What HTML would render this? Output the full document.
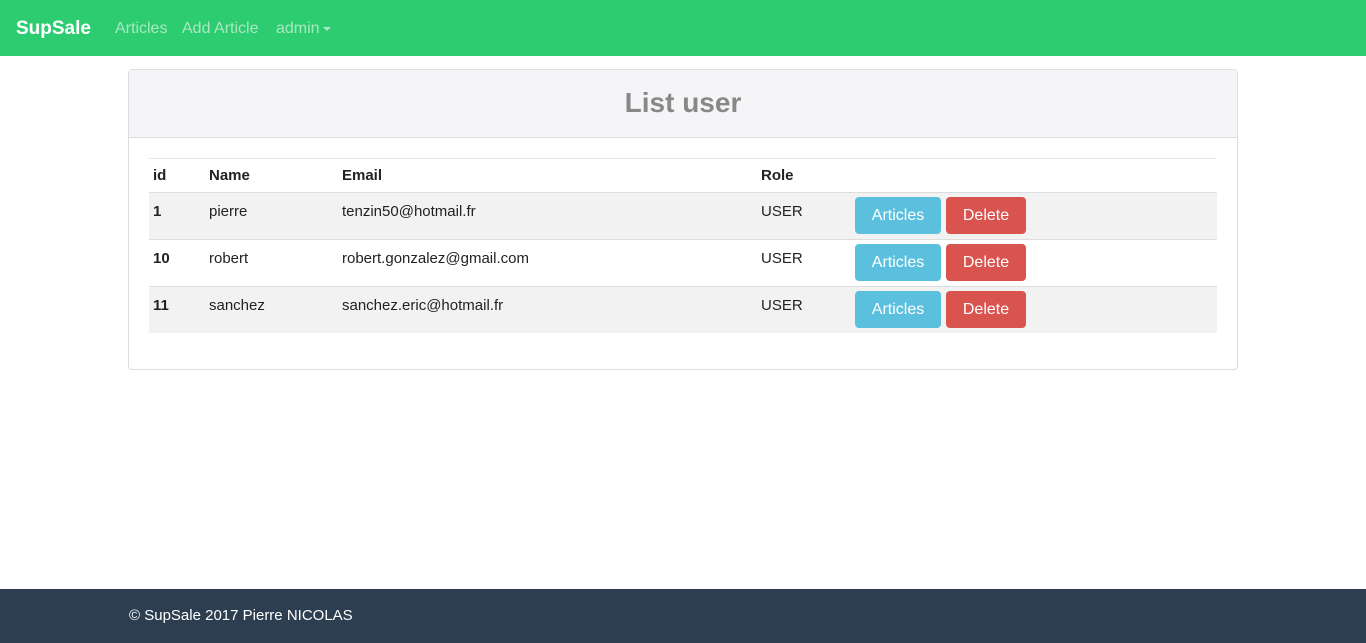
<!DOCTYPE html>
<html><head><style>
body{margin:0;width:1366px;height:643px;position:relative;font-family:"Liberation Sans",sans-serif;font-size:15px;color:#222;background:#fff;overflow:hidden}
.nav{position:absolute;left:0;top:0;width:1366px;height:56px;background:#2ecc71}
.nav span{position:absolute;top:20px;font-size:16px;color:#a8e8c2}
.brand{left:16px;font-weight:bold;font-size:19px!important;color:#fff!important;top:18px!important}
.caret{display:inline-block;border-top:4px solid #a8e8c2;border-left:4px solid transparent;border-right:4px solid transparent;vertical-align:middle;margin-left:3px}
.panel{position:absolute;left:128px;top:69px;width:1108px;height:299px;border:1px solid #ddd;border-radius:4px}
.ph{height:67px;background:#f5f5f7;border-bottom:1px solid #ddd;text-align:center;font-size:28px;font-weight:bold;color:#888;line-height:66px}
.t{position:absolute;left:20px;top:88px;width:1068px;border-top:1px solid #e8e8e8}
.r{position:absolute;left:0;width:1068px;height:46px}
.r div{position:absolute;top:10px}
.g{background:#f2f2f2}
.b{position:absolute;top:4px!important;height:37px;border-radius:4px;color:#fff;line-height:37px;text-align:center;font-size:16px}
.foot{position:absolute;left:0;top:589px;width:1366px;height:54px;background:#2c3e50;color:#fff}
</style></head><body>
<div class="nav"><span class="brand">SupSale</span><span style="left:115px">Articles</span><span style="left:182px">Add Article</span><span style="left:276px">admin<i class="caret"></i></span></div>
<div class="panel"><div class="ph">List user</div>
<div class="t">
<div class="r" style="top:0;height:33px;font-weight:bold"><div style="left:4px;top:8px">id</div><div style="left:60px;top:8px">Name</div><div style="left:193px;top:8px">Email</div><div style="left:612px;top:8px">Role</div></div>
<div class="r g" style="top:33px;border-top:1px solid #ddd"><div style="left:4px;font-weight:bold">1</div><div style="left:60px">pierre</div><div style="left:193px">tenzin50@hotmail.fr</div><div style="left:612px">USER</div><div class="b" style="left:706px;width:86px;background:#5bc0de">Articles</div><div class="b" style="left:797px;width:80px;background:#d9534f">Delete</div></div>
<div class="r" style="top:80px;border-top:1px solid #ddd"><div style="left:4px;font-weight:bold">10</div><div style="left:60px">robert</div><div style="left:193px">robert.gonzalez@gmail.com</div><div style="left:612px">USER</div><div class="b" style="left:706px;width:86px;background:#5bc0de">Articles</div><div class="b" style="left:797px;width:80px;background:#d9534f">Delete</div></div>
<div class="r g" style="top:127px;border-top:1px solid #ddd"><div style="left:4px;font-weight:bold">11</div><div style="left:60px">sanchez</div><div style="left:193px">sanchez.eric@hotmail.fr</div><div style="left:612px">USER</div><div class="b" style="left:706px;width:86px;background:#5bc0de">Articles</div><div class="b" style="left:797px;width:80px;background:#d9534f">Delete</div></div>
</div></div>
<div class="foot"><span style="position:absolute;left:129px;top:18px">© SupSale 2017 Pierre NICOLAS</span></div>
</body></html>
